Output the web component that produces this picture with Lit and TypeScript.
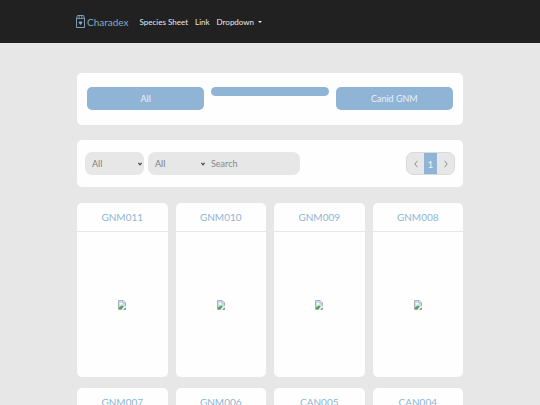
import { LitElement, html, css, svg } from "lit";
import { customElement, property } from "lit/decorators.js";

const brokenImage = svg`
  <path d="M.5 .5H5L7.5 3V9.500H.5Z" fill="#c9dcf3" stroke="#a9adb3"/>
  <path d="M5 .5V3H7.500Z" fill="#fff" stroke="#a9adb3" stroke-width=".6"/>
  <ellipse cx="3" cy="3.800" rx="1.500" ry=".9" fill="#fff"/>
  <path d="M1 9V7.500L4 5.500L5.500 6.500L3.500 9Z" fill="#4fa443"/>
  <path d="M3.500 10L8 5.500V7L5 10Z" fill="#fff"/>
  <path d="M5.500 9.500L7.500 7.500V9.500Z" fill="#4fa443"/>`;

@customElement("species-card")
export class SpeciesCard extends LitElement {
  @property() name = "";

  static styles = css`
    :host {
      display: flex;
      flex-direction: column;
      background: #fefefe;
      border-radius: 5px;
    }
    .title {
      padding: 4px 0;
      border-bottom: 1px solid #e7e7e7;
      text-align: center;
      font-size: 10px;
      line-height: 20px;
    }
    .link {
      color: #8fb5d5;
      text-decoration: none;
    }
    .picture {
      display: grid;
      place-items: center;
      height: 145px;
    }
    .broken {
      width: 8px;
      height: 10px;
    }
  `;

  render() {
    return html`
      <div class="title"><a class="link" href="#${this.name}">${this.name}</a></div>
      <div class="picture">
        <svg class="broken" viewBox="0 0 8 10" role="img" aria-label=${this.name}>${brokenImage}</svg>
      </div>
    `;
  }
}

@customElement("app-root")
export class AppRoot extends LitElement {
  static styles = css`
    :host {
      display: block;
      min-height: 100vh;
      background: #e7e7e7;
      font-family: Lato, "Liberation Sans", sans-serif;
      font-size: 9px;
      line-height: 12px;
      color: #7c7f82;
    }
    * {
      box-sizing: border-box;
    }
    button,
    input,
    select {
      margin: 0;
      border: 0;
      font: inherit;
      color: inherit;
    }
    .navbar {
      display: flex;
      align-items: center;
      gap: 7px;
      height: 43px;
      padding: 0 76px;
      background: #212121;
      font-size: 8px;
    }
    .brand {
      display: flex;
      align-items: center;
      gap: 2px;
      margin-right: 4px;
      color: #86abc6;
      font-size: 10px;
      text-decoration: none;
    }
    .logo {
      width: 9px;
      height: 13px;
    }
    .nav-link {
      display: flex;
      align-items: center;
      gap: 4px;
      padding: 0;
      background: none;
      color: #e8e8e8;
      text-decoration: none;
    }
    .caret {
      width: 4px;
      height: 2px;
    }
    .page {
      padding: 30px 77px 16px;
    }
    .panel {
      background: #fefefe;
      border-radius: 5px;
    }
    .types {
      display: grid;
      grid-template-columns: repeat(3, 1fr);
      align-items: start;
      gap: 7px;
      padding: 14px 10px 15px;
      margin-bottom: 15px;
    }
    .type {
      min-height: 9px;
      padding: 0;
      border-radius: 5px;
      background: #8fb4d5;
      color: #e9f1f8;
    }
    .type.filled {
      height: 23px;
    }
    .toolbar {
      display: flex;
      justify-content: space-between;
      padding: 12px 8px;
      margin-bottom: 16px;
    }
    .filters,
    .search {
      display: flex;
    }
    .filters {
      gap: 4px;
    }
    .field {
      position: relative;
      width: 59px;
    }
    .select {
      width: 100%;
      height: 23px;
      padding: 0 7px;
      border-radius: 7px;
      background: #e7e7e7;
      appearance: none;
    }
    .search .select {
      border-radius: 7px 0 0 7px;
    }
    .arrow {
      position: absolute;
      right: 2px;
      top: 10px;
      width: 4px;
      height: 4px;
      pointer-events: none;
    }
    .query {
      width: 93px;
      height: 23px;
      padding: 0 4px;
      border-radius: 0 7px 7px 0;
      background: #e7e7e7;
    }
    .query::placeholder {
      color: #84888c;
      opacity: 1;
    }
    .pager {
      display: flex;
      overflow: hidden;
      height: 23px;
      border: 1px solid #dadada;
      border-radius: 7px;
      background: #e7e7e7;
    }
    .step {
      display: grid;
      place-items: center;
      width: 17px;
      padding: 0;
      background: none;
    }
    .step.current {
      width: 13px;
      background: #8fb4d5;
      color: #e9f1f8;
      font-size: 10px;
    }
    .chevron {
      width: 4px;
      height: 8px;
    }
    .cards {
      display: grid;
      grid-template-columns: repeat(4, 1fr);
      gap: 11px 8px;
    }
  `;

  private names = ["GNM011", "GNM010", "GNM009", "GNM008", "GNM007", "GNM006", "CAN005", "CAN004"];

  private select(label: string) {
    return html`
      <div class="field">
        <select class="select" aria-label=${label}><option>All</option></select>
        <svg class="arrow" viewBox="0 0 4 4" aria-hidden="true">
          <path d="M.4 .8L2 2.800L3.600 .8" fill="none" stroke="#444" stroke-width="1.200"/>
        </svg>
      </div>
    `;
  }

  private step(label: string, path: string) {
    return html`
      <button class="step" aria-label=${label}>
        <svg class="chevron" viewBox="0 0 4 8" aria-hidden="true">
          <path d=${path} fill="none" stroke="#8b8b8b" stroke-width="1"/>
        </svg>
      </button>
    `;
  }

  render() {
    return html`
      <nav class="navbar">
        <a class="brand" href="#">
          <svg class="logo" viewBox="0 0 9 13" fill="none" stroke="#86abc6" aria-hidden="true">
            <path d="M1.500 .5H7.500L8.500 3.500V12.500H.5V3.500Z" stroke-width=".9"/>
            <path d="M.5 3.500H8.500M3.200 .5V3.500M5.800 .5V3.500" stroke-width=".8"/>
            <path d="M4.500 10L2.700 7.800Q2.500 6 4.500 6.600Q6.500 6 6.300 7.800Z" fill="#86abc6" stroke="none"/>
          </svg>
          Charadex
        </a>
        <a class="nav-link" href="#species">Species Sheet</a>
        <a class="nav-link" href="#link">Link</a>
        <button class="nav-link" aria-haspopup="true">
          Dropdown
          <svg class="caret" viewBox="0 0 4 2" aria-hidden="true"><path d="M0 0H4L2 2Z" fill="#e8e8e8"/></svg>
        </button>
      </nav>
      <main class="page">
        <section class="panel types">
          <button class="type filled">All</button>
          <button class="type" aria-label="Unnamed species"></button>
          <button class="type filled">Canid GNM</button>
        </section>
        <section class="panel toolbar">
          <div class="filters">
            ${this.select("Filter")}
            <div class="search">
              ${this.select("Search by")}
              <input class="query" type="text" placeholder="Search" aria-label="Search" />
            </div>
          </div>
          <div class="pager">
            ${this.step("Previous page", "M3.500 .8L.8 4L3.500 7.200")}
            <button class="step current" aria-current="page">1</button>
            ${this.step("Next page", "M.5 .8L3.200 4L.5 7.200")}
          </div>
        </section>
        <section class="cards">
          ${this.names.map((name) => html`<species-card name=${name}></species-card>`)}
        </section>
      </main>
    `;
  }
}
